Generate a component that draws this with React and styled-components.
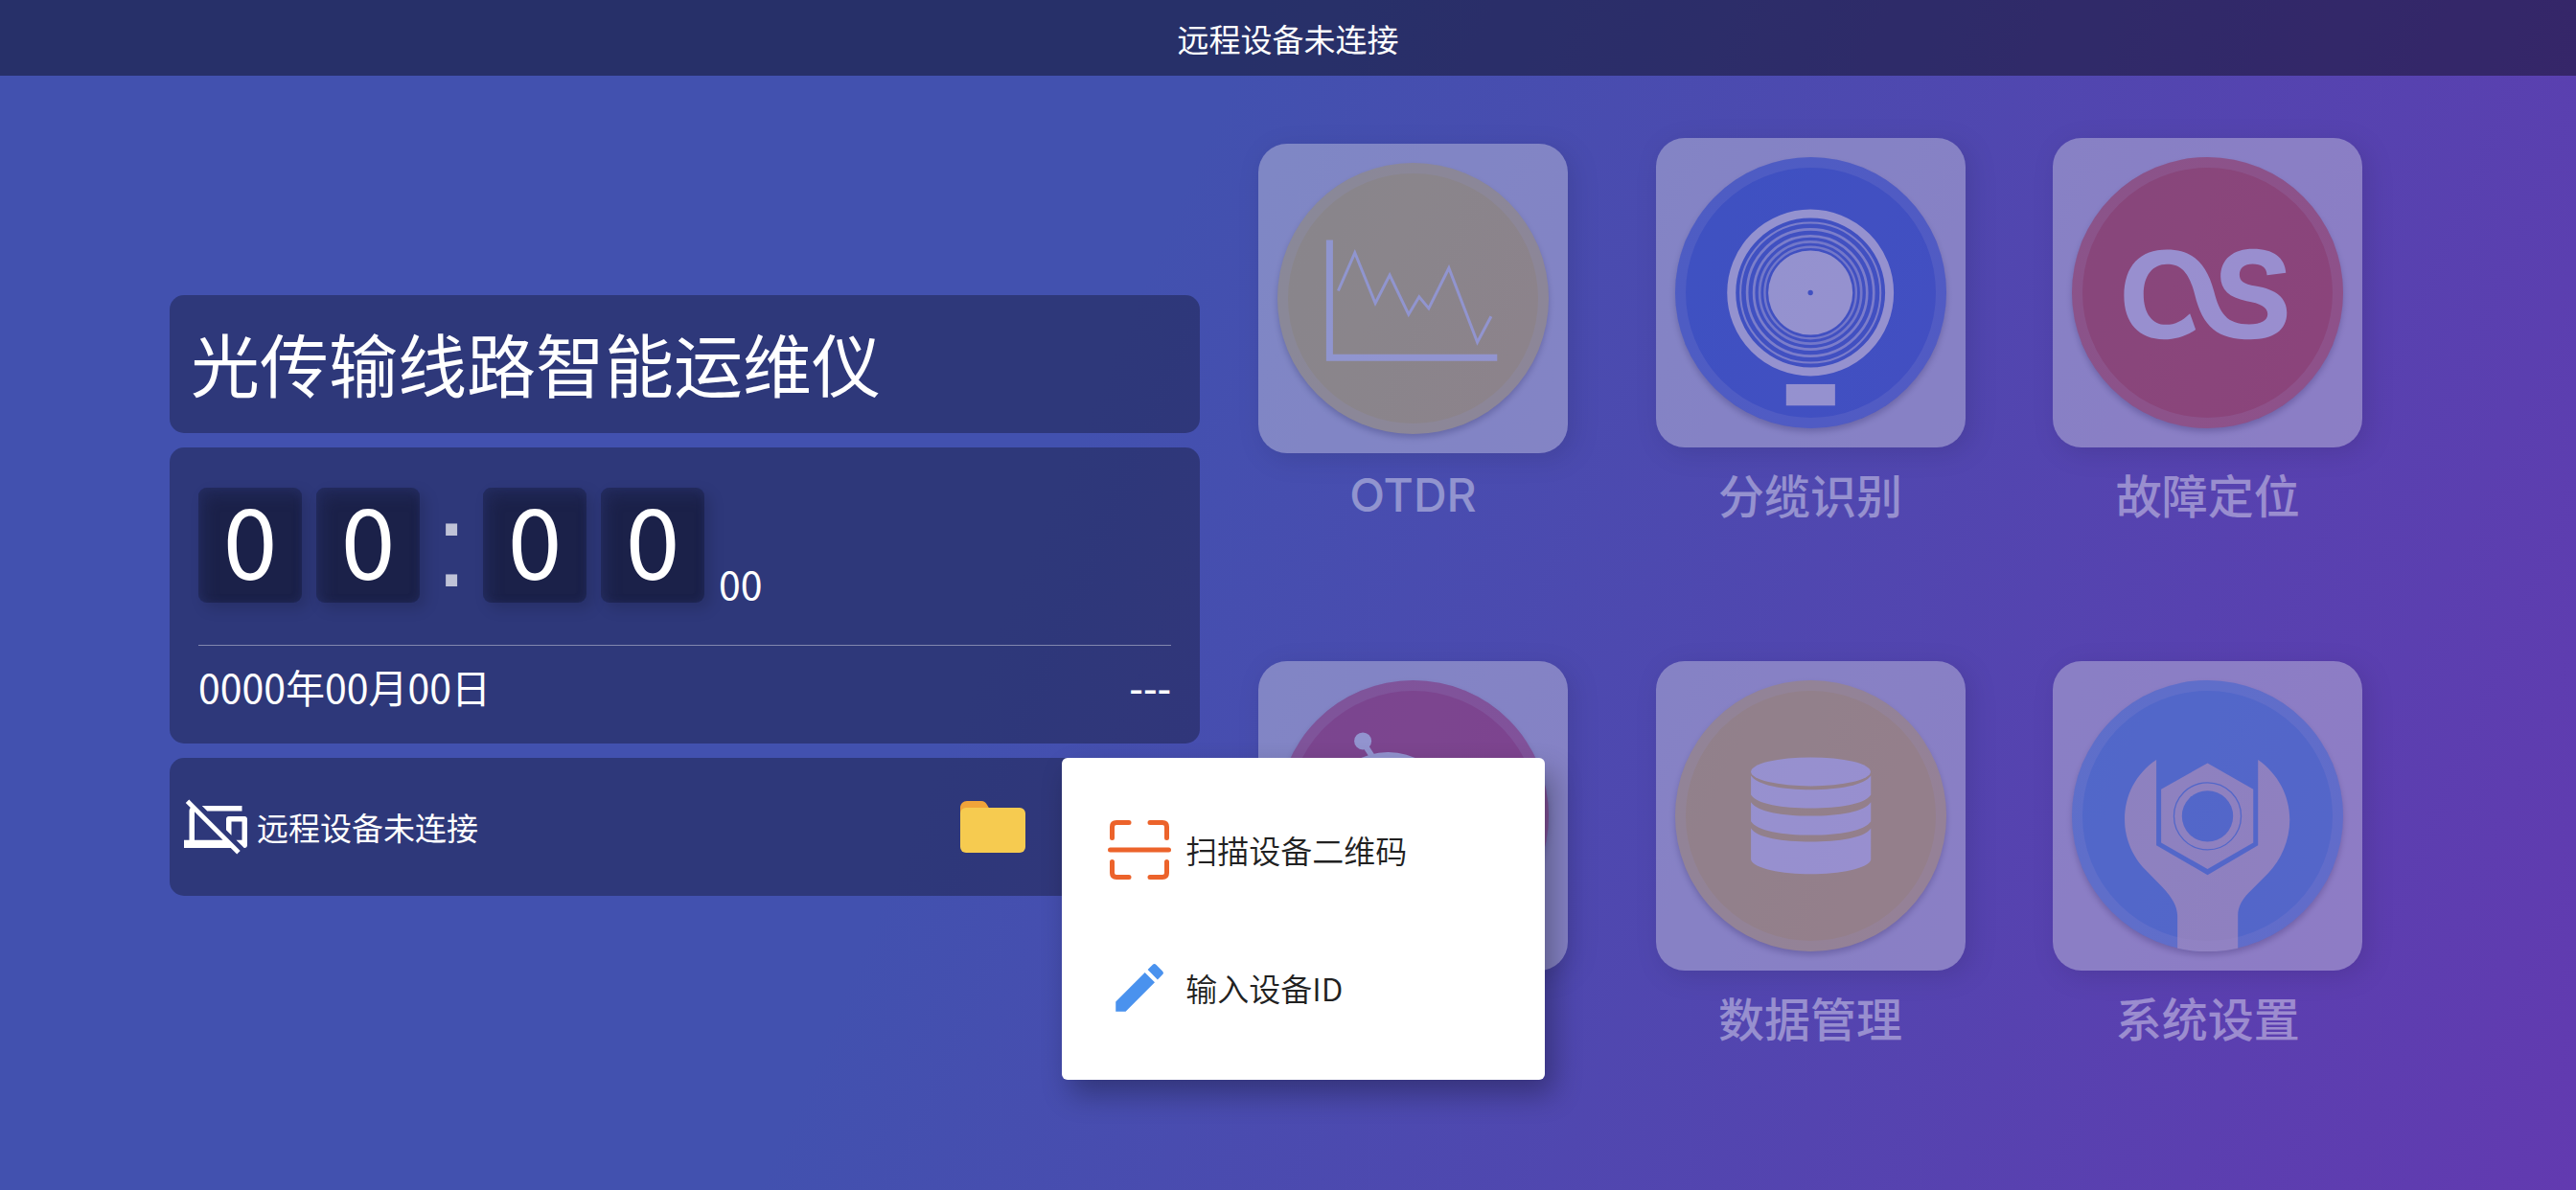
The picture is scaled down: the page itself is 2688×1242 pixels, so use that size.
import React, { useState } from 'react'
import styled, { createGlobalStyle } from 'styled-components'
import { MdPhonelinkOff, MdEdit } from 'react-icons/md'

const OtdrIcon = () => (
  <svg viewBox='129 119 848 848'>
    <path d='M292 360V728H816' fill='none' stroke='#fff' strokeWidth='21' />
    <polyline
      points='319,519 371,400 435,558 480,470 539,593 572,538 602,574 665,448 754,680 797,599'
      fill='none'
      stroke='#fff'
      strokeWidth='9'
    />
  </svg>
)

const CableIcon = () => (
  <svg viewBox='144 101 848 848'>
    <g fill='none' stroke='#fff'>
      <circle cx='567' cy='525' r='247' strokeWidth='27' />
      <circle cx='567' cy='525' r='219' strokeWidth='6' opacity='0.7' />
      <circle cx='567' cy='525' r='198' strokeWidth='8' opacity='0.7' />
      <circle cx='567' cy='525' r='177' strokeWidth='8' opacity='0.7' />
      <circle cx='567' cy='525' r='159' strokeWidth='8' opacity='0.6' />
      <circle cx='567' cy='525' r='143' strokeWidth='7' opacity='0.6' />
    </g>
    <circle cx='567' cy='525' r='132' fill='#fff' />
    <circle cx='567' cy='525' r='8' fill='#2e5cdd' />
    <rect x='491' y='811' width='153' height='67' fill='#fff' />
  </svg>
)

const FaultIcon = () => (
  <svg viewBox='126 101 848 848'>
    <path
      fill='#fff'
      d='M513 640C485 660 450 671 414 671C335 671 289 620 289 535C289 440 340 390 423 390C510 390 548 440 570 520C588 590 610 624 680 624C718 624 738 612 738 592C738 570 715 558 672 551C618 541 591 515 591 475C591 420 630 388 693 388C755 388 792 415 795 463L736 470C735 445 718 435 691 435C665 435 650 448 650 468C650 488 662 498 700 504C765 514 798 542 798 588C798 643 755 671 685 671C580 671 535 632 510 530C492 462 468 436 423 436C378 436 350 472 350 530C350 588 376 625 420 625C450 625 472 612 495 590Z'
    />
  </svg>
)

const RobotIcon = () => (
  <svg viewBox='129 119 848 848'>
    <circle cx='396' cy='309' r='27' fill='#fff' />
    <path d='M400 318L440 380' stroke='#fff' strokeWidth='18' />
    <ellipse cx='475' cy='445' rx='150' ry='101' fill='#fff' />
  </svg>
)

const DataIcon = () => (
  <svg viewBox='144 119 848 848'>
    <g fill='#fff'>
      <ellipse cx='568' cy='405' rx='187' ry='45' />
      <path d='M381 417C400 447 480 461 568 461C656 461 737 447 756 417V477C737 507 656 519 568 519C480 519 400 507 381 477Z' />
      <path d='M381 500C400 530 480 543 568 543C656 543 737 530 756 500V560C737 590 656 603 568 603C480 603 400 590 381 560Z' />
      <path d='M381 582C400 612 480 624 568 624C656 624 737 612 756 582V680C750 708 656 725 568 725C480 725 387 708 381 680Z' />
    </g>
  </svg>
)

const SettingIcon = () => (
  <svg viewBox='126 119 848 848'>
    <g fill='#dfe1d9'>
      <path d='M390 368V635L550 728L708 635V368C770 412 807 480 807 555C807 620 780 680 740 722L690 772C660 800 645 825 645 855V957A424 424 0 0 1 456 957V855C455 825 440 800 410 767L355 711C320 675 291 620 291 555C291 480 325 412 390 368Z' />
      <path d='M550 378L693 460V627L550 709L405 627V460Z' />
    </g>
    <circle cx='550' cy='544' r='105' fill='none' stroke='#4ba0f0' strokeWidth='4' />
    <circle cx='550' cy='544' r='80' fill='#4ba0f0' />
  </svg>
)

const FolderIcon = () => (
  <svg viewBox='0 0 68 54' width='68' height='54'>
    <path d='M0 7C0 3 3 0 7 0H22C25 0 26 1 28 4L31 9V20H0Z' fill='#f0a43a' />
    <rect y='7' width='68' height='47' rx='6' fill='#f6cb50' />
  </svg>
)

const ScanIcon = () => (
  <svg viewBox='0 0 66 66' width='66' height='66'>
    <g fill='none' stroke='#ec632b' strokeWidth='5' strokeLinecap='round'>
      <path d='M22 4.5H9Q4.5 4.5 4.5 9V20.5' />
      <path d='M44 4.5H57Q61.5 4.5 61.5 9V20.5' />
      <path d='M22 61.5H9Q4.5 61.5 4.5 57V45.5' />
      <path d='M44 61.5H57Q61.5 61.5 61.5 57V45.5' />
      <path d='M2.5 33H63.5' />
    </g>
  </svg>
)

const menus = [
  { id: 'otdr', label: 'OTDR', color: '#f0d758', Icon: OtdrIcon, latin: true },
  { id: 'cable', label: '分缆识别', color: '#2e5cdd', Icon: CableIcon },
  { id: 'fault', label: '故障定位', color: '#d9492e', Icon: FaultIcon },
  { id: 'robot', label: '', color: '#c73d60', Icon: RobotIcon },
  { id: 'data', label: '数据管理', color: '#f5d756', Icon: DataIcon },
  { id: 'setting', label: '系统设置', color: '#4ba0f0', Icon: SettingIcon },
]

const App = () => {
  const [status] = useState('远程设备未连接')
  const [time] = useState({ hour: '00', minute: '00', second: '00' })

  return (
    <Page>
      <GlobalStyle />
      <Main>
        <Side>
          <Panel>
            <Title>光传输线路智能运维仪</Title>
          </Panel>
          <ClockPanel>
            <Clock>
              <Digit>{time.hour[0]}</Digit>
              <Digit>{time.hour[1]}</Digit>
              <Colon>:</Colon>
              <Digit>{time.minute[0]}</Digit>
              <Digit>{time.minute[1]}</Digit>
              <Second>{time.second}</Second>
            </Clock>
            <DateRow>
              <span>0000年00月00日</span>
              <Weekday>---</Weekday>
            </DateRow>
          </ClockPanel>
          <Panel>
            <Status>
              <MdPhonelinkOff size={66} />
              <span>{status}</span>
            </Status>
            <FolderButton type='button' aria-label='文件夹'>
              <FolderIcon />
            </FolderButton>
            <MenuAnchor>
              <Popup role='menu'>
                <PopupItem type='button' role='menuitem'>
                  <ScanIcon />
                  <span>扫描设备二维码</span>
                </PopupItem>
                <PopupItem type='button' role='menuitem'>
                  <MdEdit size={66} color='#4a92ee' />
                  <span>输入设备ID</span>
                </PopupItem>
              </Popup>
            </MenuAnchor>
          </Panel>
        </Side>
        <MenuGrid>
          {menus.map(({ id, label, color, Icon, latin }) => (
            <Tile key={id} type='button' disabled>
              <Card>
                <Disc $color={color}>
                  <Icon />
                </Disc>
              </Card>
              <Label $latin={latin}>{label}</Label>
            </Tile>
          ))}
        </MenuGrid>
      </Main>
      <Header>{status}</Header>
    </Page>
  )
}

export default App

const GlobalStyle = createGlobalStyle`
  * {
    box-sizing: border-box;
  }
  body {
    margin: 0;
    font-family: "Noto Sans CJK SC", sans-serif;
    color: #fff;
  }
  button {
    padding: 0;
    border: 0;
    background: none;
    font: inherit;
    color: inherit;
  }
  svg {
    display: block;
    flex: none;
  }
`
const Page = styled.div`
  display: grid;
  grid-template-columns: 1fr;
  min-height: 100vh;
  background: linear-gradient(113deg, #4251af 41%, #623ab0);
`
/* the header and the body share one grid cell, so the body stays centred on the whole screen */
const Header = styled.header`
  grid-area: 1 / 1;
  align-self: start;
  display: flex;
  align-items: center;
  justify-content: center;
  height: 79px;
  background: rgba(0, 0, 0, 0.4);
  font-size: 33px;
`
const Main = styled.main`
  grid-area: 1 / 1;
  display: flex;
  align-items: center;
  gap: 15px;
  padding: 0 177px;
`
const Side = styled.section`
  flex: none;
  display: flex;
  flex-direction: column;
  gap: 15px;
  width: 40vw;
`
const Panel = styled.div`
  display: flex;
  align-items: center;
  height: 144px;
  border-radius: 15px;
  background: rgba(0, 0, 0, 0.3);
`
const Title = styled.h1`
  margin: 0;
  padding: 0 0 4px 22px;
  font-size: 72px;
  font-weight: 400;
  line-height: 100px;
`
const ClockPanel = styled(Panel)`
  flex-direction: column;
  align-items: stretch;
  height: auto;
  padding: 42px 30px 30px;
`
const Clock = styled.div`
  display: flex;
  align-items: flex-end;
  gap: 15px;
  padding-bottom: 44px;
  border-bottom: 1px solid rgba(255, 255, 255, 0.4);
`
const Digit = styled.div`
  width: 108px;
  height: 120px;
  border-radius: 9px;
  background: rgba(0, 0, 0, 0.4);
  box-shadow: 6px 6px 15px rgba(0, 0, 0, 0.15), inset 6px 8px 15px rgba(46, 56, 118, 0.4),
    inset 0 0 9px rgba(46, 56, 118, 0.3);
  font-size: 102px;
  line-height: 104px;
  text-align: center;
`
const Colon = styled.div`
  width: 36px;
  font-family: "Liberation Sans", sans-serif;
  font-size: 125px;
  line-height: 120px;
  text-align: center;
  color: rgba(255, 255, 255, 0.7);
`
const Second = styled.div`
  font-size: 41px;
  line-height: 42px;
`
const DateRow = styled.div`
  display: flex;
  justify-content: space-between;
  padding-top: 12px;
  font-size: 41px;
  line-height: 60px;
`
const Weekday = styled.span`
  font-weight: 500;
`
const Status = styled.div`
  flex: 1;
  display: flex;
  align-items: center;
  gap: 10px;
  padding-left: 15px;
  font-size: 33px;
`
const FolderButton = styled.button`
  display: flex;
  align-items: center;
  justify-content: center;
  width: 144px;
  height: 144px;
`
const MenuAnchor = styled.div`
  position: relative;
  width: 144px;
  height: 144px;
`
const Popup = styled.div`
  position: absolute;
  top: 0;
  left: 0;
  z-index: 2;
  width: 504px;
  padding: 24px 0;
  border-radius: 6px;
  background: #fff;
  box-shadow: 9px 15px 30px rgba(0, 0, 0, 0.3);
`
const PopupItem = styled.button`
  display: flex;
  align-items: center;
  gap: 15px;
  width: 100%;
  height: 144px;
  padding: 0 48px;
  font-size: 33px;
  font-weight: 350;
  color: #212121;
`
const MenuGrid = styled.section`
  flex: 1;
  display: grid;
  grid-template-columns: repeat(3, 1fr);
  grid-auto-rows: 546px;
  place-items: center;
`
const Tile = styled.button`
  display: flex;
  flex-direction: column;
  align-items: center;
  gap: 15px;
  opacity: 0.4;
`
const Card = styled.div`
  width: 323px;
  height: 323px;
  padding: 20px;
  border-radius: 30px;
  background: #d9d9e6;
  box-shadow: 6px 6px 24px rgba(0, 0, 0, 0.25);
`
const Disc = styled.div`
  position: relative;
  height: 100%;
  border-radius: 50%;
  background: ${({ $color }) => $color};
  box-shadow: 0 4px 6px rgba(0, 0, 0, 0.3);

  &::after {
    content: '';
    position: absolute;
    inset: 0;
    border: 11px solid rgba(255, 255, 255, 0.18);
    border-radius: 50%;
  }
`
const Label = styled.span`
  height: ${({ $latin }) => ($latin ? '58px' : '70px')};
  font-family: ${({ $latin }) => ($latin ? 'Inter, sans-serif' : 'inherit')};
  font-size: 48px;
  font-weight: 500;
  line-height: ${({ $latin }) => ($latin ? '58px' : '66px')};
  color: #fff;
`
